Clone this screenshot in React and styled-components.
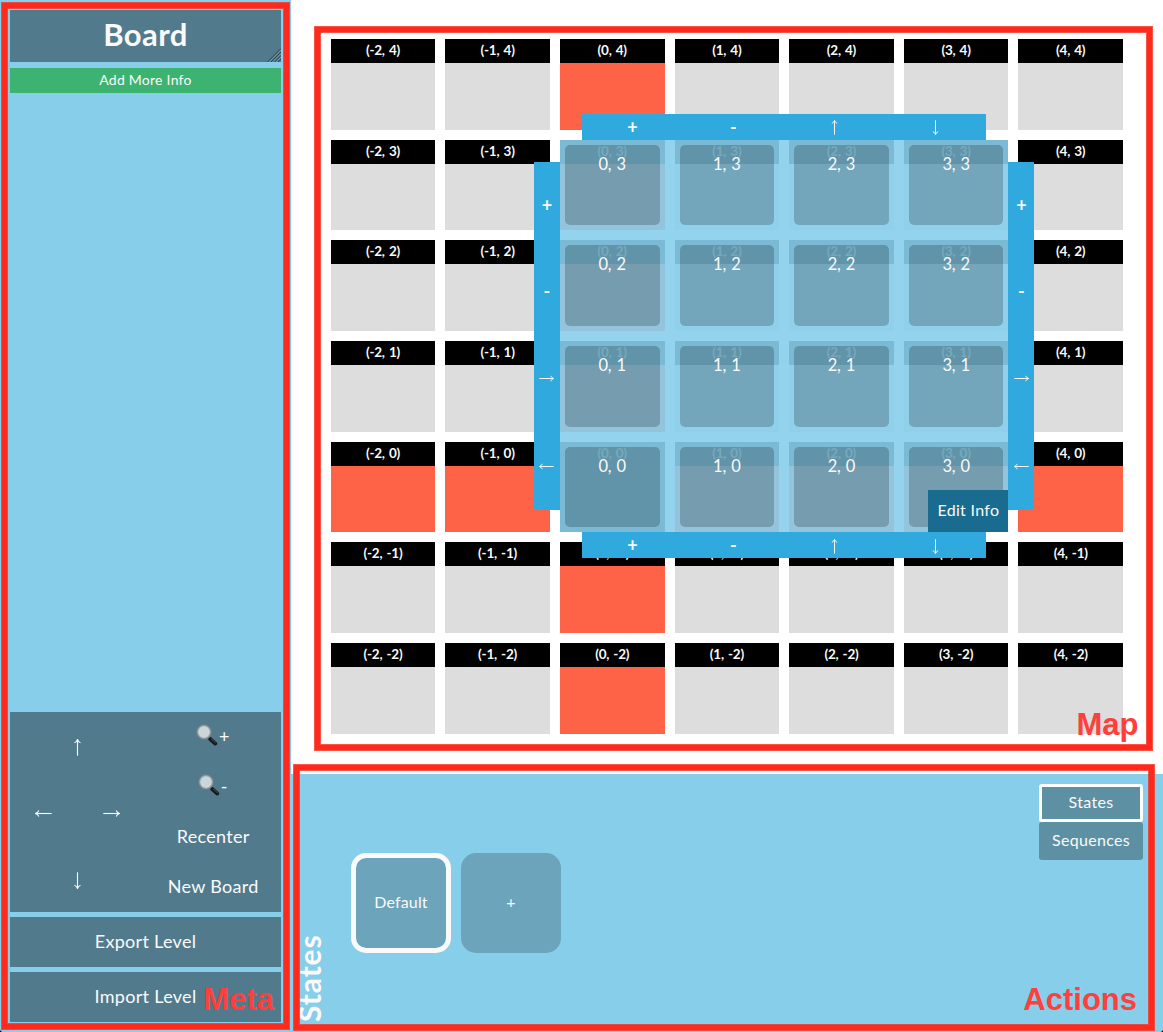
import React from "react";
import styled, { createGlobalStyle, css } from "styled-components";

const GlobalStyle = createGlobalStyle`
  * { box-sizing: border-box; }
  html, body { margin: 0; background: #000; }
  body { font-family: Lato, "Open Sans", sans-serif; color: #fafafa; overflow: hidden; }
  button { font: inherit; color: inherit; border: 0; margin: 0; padding: 0; background: none; }
`;

const Window = styled.div`
  position: relative;
  display: flex;
  width: 1163px;
  height: 1032px;
  overflow: hidden;
  background: #fff;
  border-radius: 0 0 4px 4px;
`;

/* Sidebar */
const Sidebar = styled.aside`
  display: flex;
  flex-direction: column;
  flex: none;
  width: 291px;
  padding: 10px;
  background: #87ceeb;
`;

const TitleBox = styled.div`
  display: flex;
  justify-content: center;
  position: relative;
  height: 52px;
  background: rgba(0, 0, 0, 0.4);
  font-size: 31px;
  font-weight: 700;
  line-height: 48px;
  letter-spacing: 0.4px;
`;

const Grip = styled.svg`
  position: absolute;
  right: 0;
  bottom: 0;
`;

const InfoButton = styled.button`
  height: 25px;
  margin-top: 6px;
  padding-bottom: 2px;
  background: #3cb371;
  font-size: 14px;
  line-height: 23px;
  letter-spacing: 0.25px;
`;

const Controls = styled.div`
  display: flex;
  height: 200px;
  margin-top: auto;
  background: rgba(0, 0, 0, 0.4);
`;

const ArrowPad = styled.div`
  flex: 1;
  display: grid;
  grid-template-rows: repeat(3, 1fr);
`;

const PadRow = styled.div`
  display: flex;
`;

const PadButton = styled.button`
  flex: 1;
  display: flex;
  align-items: center;
  justify-content: center;
  padding-top: 4px;
`;

const Commands = styled.div`
  flex: 1;
  display: grid;
  grid-template-rows: repeat(4, 1fr);
`;

const Command = styled.button`
  display: flex;
  align-items: center;
  justify-content: center;
  padding-bottom: 2px;
  font-size: 18px;
  letter-spacing: 0.3px;
`;

const FileButton = styled.button`
  height: 50px;
  margin-top: 5px;
  padding-bottom: 2px;
  background: rgba(0, 0, 0, 0.4);
  font-size: 18px;
  letter-spacing: 0.3px;
`;

/* Map */
const Main = styled.main`
  flex: 1;
  display: flex;
  flex-direction: column;
`;

const MapArea = styled.section`
  height: 774px;
  padding: 39px 0 0 39.65px;
`;

const Board = styled.div`
  position: relative;
  display: grid;
  width: 792.41px;
  height: 694.67px;
  grid-template-columns: repeat(7, 1fr);
  grid-template-rows: repeat(7, 1fr);
  gap: 10px;
`;

const Cell = styled.div`
  background: ${(p) => p.$fill};
`;

const CellLabel = styled.div`
  height: 24px;
  background: #000;
  font-size: 13.5px;
  font-weight: 700;
  line-height: 23px;
  word-spacing: 1px;
  letter-spacing: -0.2px;
  text-align: center;
`;

const Selection = styled.div`
  position: absolute;
  left: 229.26px;
  top: 100.67px;
  width: 448.52px;
  height: 392.67px;
  padding: 5px;
  display: grid;
  grid-template-columns: repeat(4, 1fr);
  grid-template-rows: repeat(4, 1fr);
  gap: 20px;
  background: rgba(135, 206, 235, 0.9);
`;

const SelectedCell = styled.div`
  border-radius: 5px;
  background: rgba(0, 0, 0, 0.2);
  font-size: 16.5px;
  line-height: 39.5px;
  word-spacing: 1.5px;
  letter-spacing: -0.3px;
  text-align: center;
`;

const sides = {
  top: css`left: 22px; bottom: 100%; width: 404px; height: 26px;`,
  bottom: css`left: 22px; top: 100%; width: 404px; height: 26px;`,
  left: css`right: 100%; top: 22px; width: 26px; height: 348px; flex-direction: column;`,
  right: css`left: 100%; top: 22px; width: 26px; height: 348px; flex-direction: column;`,
};

const EdgeBar = styled.div`
  position: absolute;
  display: flex;
  background: #30a9de;
  ${(p) => sides[p.$side]}
`;

const EdgeButton = styled.button`
  flex: 1 1 0;
  display: flex;
  align-items: center;
  justify-content: center;
  padding-top: ${(p) => (p.$glyph ? "0" : "2px")};
  font-size: 18px;
  line-height: 20px;
  font-weight: 700;
`;

const EditInfo = styled.button`
  position: absolute;
  right: 0;
  bottom: 0;
  width: 80px;
  height: 42px;
  padding-bottom: 3px;
  background: #196c8f;
  font-size: 16px;
  letter-spacing: 0.3px;
`;

/* Actions */
const Actions = styled.section`
  flex: 1;
  display: flex;
  align-items: stretch;
  padding: 10px 20px 10px 1px;
  background: #87ceeb;
`;

const SideTitle = styled.h2`
  margin: 0;
  width: 34px;
  writing-mode: vertical-rl;
  transform: rotate(180deg);
  font-size: 30px;
  line-height: 34px;
  font-weight: 700;
  letter-spacing: 0.9px;
`;

const Tiles = styled.div`
  flex: 1;
  display: flex;
  align-items: center;
  gap: 10px;
  padding-left: 25px;
`;

const Tile = styled.button`
  width: 100px;
  height: 100px;
  padding-bottom: 3px;
  border: ${(p) => (p.$active ? "5px solid #fafafa" : "0")};
  border-radius: 15px;
  background: rgba(0, 0, 0, 0.2);
  background-clip: padding-box;
  font-size: 16px;
  letter-spacing: 0.15px;
`;

const Tabs = styled.nav`
  width: 104px;
  display: flex;
  flex-direction: column;
`;

const Tab = styled.button`
  height: 38px;
  padding-bottom: 3px;
  border: ${(p) => (p.$active ? "3px solid #fff" : "0")};
  border-radius: 3px;
  background: rgba(0, 0, 0, 0.3);
  font-size: 16px;
  letter-spacing: 0.3px;
`;

/* Annotation layer above the page */
const Frame = styled.div`
  position: absolute;
  left: ${(p) => p.$x + 1}px;
  top: ${(p) => p.$y + 1}px;
  width: ${(p) => p.$w - 2}px;
  height: ${(p) => p.$h - 2}px;
  border: 5px solid #ff2a1b;
  box-shadow: 0 0 0 1px rgba(255, 42, 27, 0.8), inset 0 0 0 1px rgba(255, 42, 27, 0.8);
  pointer-events: none;
`;

const FrameName = styled.span`
  position: absolute;
  right: ${(p) => p.$right}px;
  bottom: ${(p) => p.$bottom}px;
  color: #ff3f3b;
  font: 700 31px/36px "Liberation Sans", Arial, sans-serif;
  white-space: nowrap;
`;

const angles = { right: 0, down: 90, left: 180, up: 270 };

function Arrow({ dir, size = 17 }) {
  return (
    <svg width={size} height={size} viewBox="0 0 17 17" fill="none" stroke="#fafafa" strokeWidth="1.1">
      <g transform={`rotate(${angles[dir]} 8.5 8.5)`}>
        <path d="M0.3 8.5H16" />
        <path d="M13.2 5.5Q14 7.7 16.6 8.5Q14 9.3 13.2 11.5" />
      </g>
    </svg>
  );
}

const Lens = styled.svg`
  flex: none;
  margin: -3px 0 0 -1px;
`;

function Magnifier() {
  return (
    <Lens width="23" height="22" viewBox="0 0 23 22">
      <path d="M12.4 13.4L14.8 15.6" stroke="#9aa3a6" strokeWidth="2" />
      <path d="M14.2 15L19.3 19.6" stroke="#17191a" strokeWidth="3.8" strokeLinecap="round" />
      <path d="M15 14.8L19.6 18.9" stroke="#596063" strokeWidth="0.8" />
      <circle cx="8" cy="8" r="6.8" fill="#cbd6da" stroke="#71838a" strokeWidth="1.7" />
      <circle cx="8" cy="8" r="6.3" fill="none" stroke="#b9b9b5" strokeWidth="0.7" />
    </Lens>
  );
}

const hot = new Set([
  "0,4", "0,3", "0,2", "0,1", "0,-1", "0,-2",
  "-2,0", "-1,0", "1,0", "2,0", "3,0", "4,0",
]);
const columns = [-2, -1, 0, 1, 2, 3, 4];
const rows = [4, 3, 2, 1, 0, -1, -2];

function cellFill(key) {
  if (key === "0,0") return "#000";
  return hot.has(key) ? "#ff6347" : "#ddd";
}

function MapCell({ x, y }) {
  return (
    <Cell $fill={cellFill(`${x},${y}`)}>
      <CellLabel>{`(${x}, ${y})`}</CellLabel>
    </Cell>
  );
}

function Edge({ side }) {
  const vertical = side === "left" || side === "right";
  return (
    <EdgeBar $side={side}>
      <EdgeButton $glyph>+</EdgeButton>
      <EdgeButton $glyph>-</EdgeButton>
      <EdgeButton><Arrow dir={vertical ? "right" : "up"} size={15} /></EdgeButton>
      <EdgeButton><Arrow dir={vertical ? "left" : "down"} size={15} /></EdgeButton>
    </EdgeBar>
  );
}

export default function App() {
  return (
    <>
      <GlobalStyle />
      <Window>
        <Sidebar>
          <TitleBox>
            Board
            <Grip width="14" height="14" viewBox="0 0 14 14" stroke="#263c46" strokeWidth="0.9">
              <path d="M0.5 14L14 0.5M4 14L14 4M7.5 14L14 7.5M11 14L14 11" />
              <path d="M2 14L14 2M5.5 14L14 5.5M9 14L14 9" stroke="#91a8b2" strokeWidth="0.6" />
            </Grip>
          </TitleBox>
          <InfoButton>Add More Info</InfoButton>
          <Controls>
            <ArrowPad>
              <PadRow><PadButton><Arrow dir="up" /></PadButton></PadRow>
              <PadRow>
                <PadButton><Arrow dir="left" /></PadButton>
                <PadButton><Arrow dir="right" /></PadButton>
              </PadRow>
              <PadRow><PadButton><Arrow dir="down" /></PadButton></PadRow>
            </ArrowPad>
            <Commands>
              <Command><Magnifier />+</Command>
              <Command><Magnifier />-</Command>
              <Command>Recenter</Command>
              <Command>New Board</Command>
            </Commands>
          </Controls>
          <FileButton>Export Level</FileButton>
          <FileButton>Import Level</FileButton>
        </Sidebar>
        <Main>
          <MapArea>
            <Board>
              {rows.map((y) => columns.map((x) => <MapCell key={`${x},${y}`} x={x} y={y} />))}
              <Selection>
                {[3, 2, 1, 0].map((y) =>
                  [0, 1, 2, 3].map((x) => <SelectedCell key={`${x},${y}`}>{`${x}, ${y}`}</SelectedCell>)
                )}
                <Edge side="top" />
                <Edge side="bottom" />
                <Edge side="left" />
                <Edge side="right" />
                <EditInfo>Edit Info</EditInfo>
              </Selection>
            </Board>
          </MapArea>
          <Actions>
            <SideTitle>States</SideTitle>
            <Tiles>
              <Tile $active>Default</Tile>
              <Tile>+</Tile>
            </Tiles>
            <Tabs>
              <Tab $active>States</Tab>
              <Tab>Sequences</Tab>
            </Tabs>
          </Actions>
        </Main>
        <Frame $x={1} $y={2} $w={289} $h={1028} />
        <Frame $x={314} $y={26} $w={839} $h={725} />
        <Frame $x={293} $y={764} $w={862} $h={267} />
        <FrameName $right={889} $bottom={14}>Meta</FrameName>
        <FrameName $right={24.5} $bottom={289}>Map</FrameName>
        <FrameName $right={26} $bottom={14}>Actions</FrameName>
      </Window>
    </>
  );
}
